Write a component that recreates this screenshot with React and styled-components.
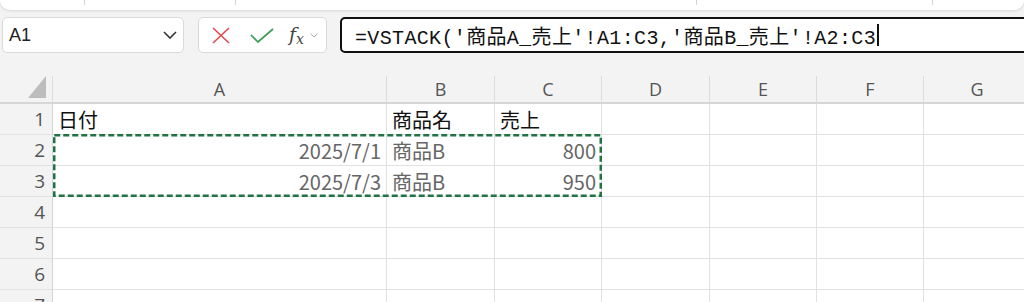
import React from "react";
import styled, { createGlobalStyle } from "styled-components";

const GlobalStyle = createGlobalStyle`
  html, body {
    margin: 0;
    padding: 0;
    background: #f3f3f3;
    overflow: hidden;
  }
  * { box-sizing: border-box; }
`;

const COLS = [
  { key: "A", width: 334 },
  { key: "B", width: 108 },
  { key: "C", width: 107 },
  { key: "D", width: 108 },
  { key: "E", width: 107 },
  { key: "F", width: 107 },
  { key: "G", width: 107 },
];

const ROWS = [
  { n: 1, cells: [{ t: "日付", head: true }, { t: "商品名", head: true }, { t: "売上", head: true }] },
  { n: 2, cells: [{ t: "2025/7/1", right: true }, { t: "商品B" }, { t: "800", right: true }] },
  { n: 3, cells: [{ t: "2025/7/3", right: true }, { t: "商品B" }, { t: "950", right: true }] },
  { n: 4, cells: [] },
  { n: 5, cells: [] },
  { n: 6, cells: [] },
  { n: 7, cells: [] },
];

const MARQUEE_W = COLS[0].width + COLS[1].width + COLS[2].width;
const MARQUEE_H = 63;

export default function App() {
  return (
    <Page>
      <GlobalStyle />
      <Ribbon>
        <RibbonSlot style={{ width: 85 }} />
        <RibbonSlot style={{ width: 151 }} />
        <RibbonSlot style={{ width: 461 }} />
        <RibbonSlot style={{ width: 236 }} />
      </Ribbon>

      <FormulaRow>
        <NameBox>
          <span>A1</span>
          <svg width="14" height="8" viewBox="0 0 14 8">
            <path d="M1 1l6 6 6-6" fill="none" stroke="#333" strokeWidth="1.6" />
          </svg>
        </NameBox>
        <ButtonBox>
          <svg width="18" height="17" viewBox="0 0 18 17">
            <path d="M1 1l16 15M17 1L1 16" stroke="#e5484d" strokeWidth="1.6" fill="none" />
          </svg>
          <svg width="24" height="15" viewBox="0 0 24 15">
            <path d="M1 7l7 7L23 1" stroke="#3a9d55" strokeWidth="1.7" fill="none" />
          </svg>
          <Fx>
            f<sub>x</sub>
          </Fx>
          <svg width="8" height="5" viewBox="0 0 8 5">
            <path d="M0.5 0.5l3.5 3.5 3.5-3.5" stroke="#aaa" strokeWidth="1" fill="none" />
          </svg>
        </ButtonBox>
        <FormulaBar>
          <FormulaText>=VSTACK('商品A_売上'!A1:C3,'商品B_売上'!A2:C3</FormulaText>
          <Caret />
        </FormulaBar>
      </FormulaRow>

      <Sheet>
        <Corner>
          <svg width="18" height="22" viewBox="0 0 18 22">
            <polygon points="18,0 18,22 0,22" fill="#bdbdbd" />
          </svg>
        </Corner>
        {COLS.map((c) => (
          <ColHead key={c.key}>{c.key}</ColHead>
        ))}
        {ROWS.map((r) => (
          <React.Fragment key={r.n}>
            <RowHead>{r.n}</RowHead>
            {COLS.map((c, i) => {
              const cell = r.cells[i];
              return (
                <Cell key={c.key} $right={cell && cell.right} $head={cell && cell.head}>
                  {cell ? cell.t : ""}
                </Cell>
              );
            })}
          </React.Fragment>
        ))}
        <CopyMarquee>
          <svg width={MARQUEE_W} height={MARQUEE_H} viewBox={`0 0 ${MARQUEE_W} ${MARQUEE_H}`}>
            <rect
              x="1.25"
              y="1.25"
              width={MARQUEE_W - 2.5}
              height={MARQUEE_H - 2.5}
              fill="none"
              stroke="#217346"
              strokeWidth="2.5"
              strokeDasharray="6 3"
            />
          </svg>
        </CopyMarquee>
      </Sheet>
    </Page>
  );
}

const Page = styled.div`
  width: 1024px;
  height: 302px;
  overflow: hidden;
  font-family: "Liberation Sans", "Noto Sans CJK JP", sans-serif;
`;

const Ribbon = styled.div`
  height: 10px;
  background: #fff;
  border-radius: 0 0 10px 10px;
  box-shadow: 0 1px 3px rgba(0, 0, 0, 0.12);
  display: flex;
`;

const RibbonSlot = styled.div`
  height: 5px;
  border-right: 1px solid #d4d4d4;
  flex-shrink: 0;
`;

const FormulaRow = styled.div`
  display: flex;
  align-items: stretch;
  height: 36px;
  margin-top: 7px;
  padding-left: 2px;
  width: 1040px;
`;

const NameBox = styled.div`
  width: 182px;
  background: #fff;
  border: 1px solid #d9d9d9;
  border-radius: 5px;
  display: flex;
  align-items: center;
  justify-content: space-between;
  padding: 0 6px 0 6px;
  font-size: 18px;
  color: #222;
`;

const ButtonBox = styled.div`
  width: 129px;
  margin-left: 14px;
  background: #fff;
  border: 1px solid #d9d9d9;
  border-radius: 5px;
  display: flex;
  align-items: center;
  padding-left: 13px;

  svg:nth-of-type(2) {
    margin-left: 20px;
  }
  svg:nth-of-type(3) {
    margin-left: 6px;
  }
`;

const Fx = styled.span`
  margin-left: 15px;
  font-family: "DejaVu Serif", serif;
  font-style: italic;
  font-size: 19px;
  color: #444;
  line-height: 1;

  sub {
    font-size: 14px;
    vertical-align: -3px;
  }
`;

const FormulaBar = styled.div`
  flex: 1;
  margin-left: 13px;
  background: #fff;
  border: 2.5px solid #111;
  border-radius: 5px;
  display: flex;
  align-items: center;
  padding-left: 13px;
`;

const FormulaText = styled.span`
  font-family: "Liberation Mono", "Noto Sans CJK JP", monospace;
  font-size: 20px;
  letter-spacing: 0.35px;
  color: #111;
  white-space: nowrap;
`;

const Caret = styled.span`
  display: inline-block;
  width: 1.5px;
  height: 22px;
  background: #111;
  margin-left: 1px;
`;

const Sheet = styled.div`
  position: relative;
  margin-top: 23px;
  display: grid;
  grid-template-columns: 53px ${COLS.map((c) => c.width + "px").join(" ")};
  grid-template-rows: 28px repeat(7, 31px);
  width: max-content;
  font-family: "Noto Sans CJK JP", sans-serif;
`;

const Corner = styled.div`
  background: #f3f3f3;
  border-right: 1px solid #dcdcdc;
  border-bottom: 2px solid #d6d6d6;
  display: flex;
  align-items: flex-end;
  justify-content: flex-end;
  padding: 0 6px 4px 0;
`;

const ColHead = styled.div`
  background: #f3f3f3;
  border-right: 1px solid #dcdcdc;
  border-bottom: 2px solid #d6d6d6;
  display: flex;
  align-items: center;
  justify-content: center;
  font-family: "Open Sans", sans-serif;
  font-size: 18px;
  color: #555;
`;

const RowHead = styled.div`
  background: #f3f3f3;
  border-right: 1px solid #d4d4d4;
  border-bottom: 1px solid #e2e2e2;
  display: flex;
  align-items: center;
  justify-content: flex-end;
  padding-right: 7px;
  font-family: "Open Sans", sans-serif;
  font-size: 19px;
  color: #555;
`;

const Cell = styled.div`
  background: #fff;
  border-right: 1px solid #e2e2e2;
  border-bottom: 1px solid #e2e2e2;
  display: flex;
  align-items: center;
  justify-content: ${(p) => (p.$right ? "flex-end" : "flex-start")};
  padding: 0 5px;
  font-size: 20px;
  color: ${(p) => (p.$head ? "#111" : "#666")};
  white-space: nowrap;
`;

const CopyMarquee = styled.div`
  position: absolute;
  grid-column: 2 / 5;
  grid-row: 3 / 5;
  top: -1px;
  left: 0;
  pointer-events: none;
  z-index: 1;

  svg {
    display: block;
  }
`;
